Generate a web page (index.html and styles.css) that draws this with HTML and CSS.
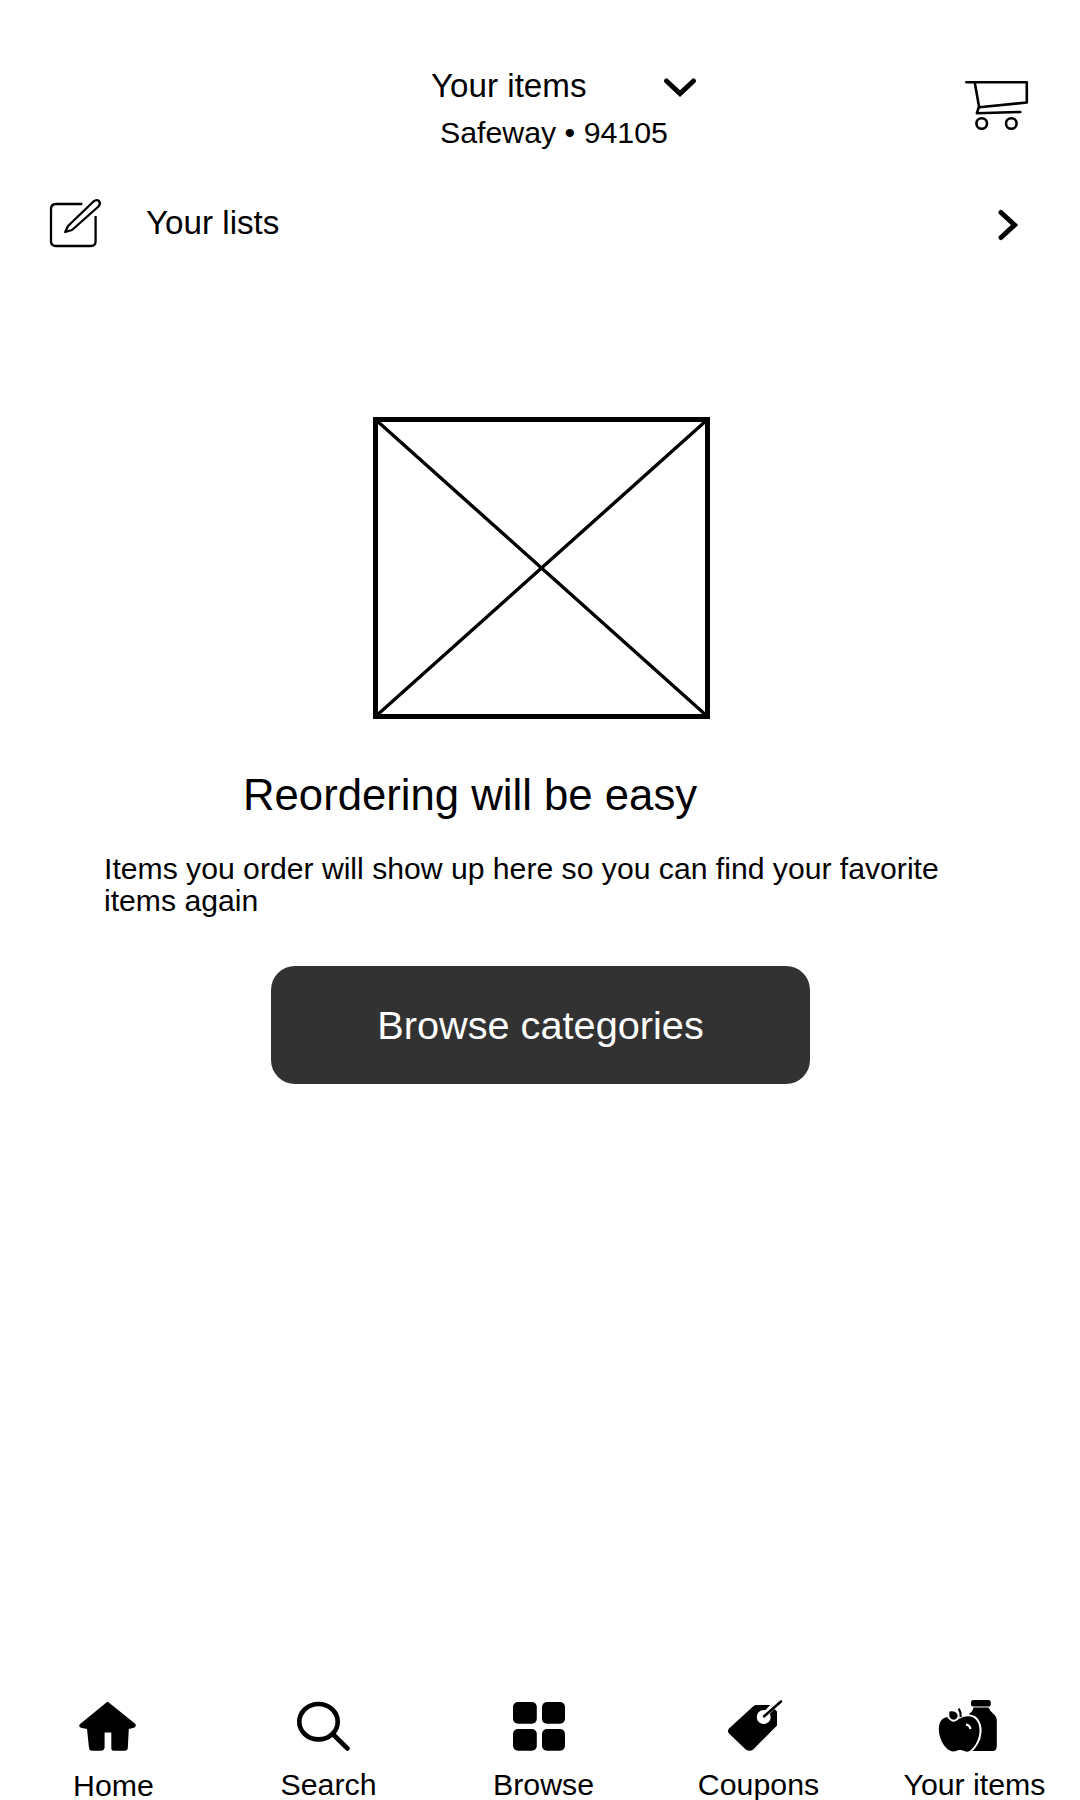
FILE: index.html
```html
<!DOCTYPE html>
<html lang="en">
<head>
<meta charset="utf-8">
<title>Your items</title>
<link rel="stylesheet" href="styles.css">
</head>
<body>
<div class="screen">
  <header class="header">
    <div class="store">
      <div class="store-title">
        <span class="title">Your items</span>
        <svg class="chevron-down" viewBox="0 0 36 24"><path d="M4.5 5 18 17.5 31.5 5"/></svg>
      </div>
      <div class="location">Safeway • 94105</div>
    </div>
    <svg class="cart" viewBox="0 0 72 58">
      <path d="M6.300 7.300H66.800V27.500L19.300 32.300M14.700 7.300 19 31.500 16.900 38.200 60.300 37"/>
      <circle cx="21.700" cy="48.500" r="5.300"/><circle cx="51.300" cy="48.500" r="5.300"/>
    </svg>
  </header>

  <a class="lists">
    <svg class="compose" viewBox="0 0 56 54">
      <path d="M34.300 8H8Q3 8 3 13V45Q3 50 8 50H43Q47.600 50 47.600 45V20"/>
      <path d="M17.200 36 20 30 45.500 5.500Q48.500 3 51 5 53 7.500 50.500 10.500L24 34Z"/>
    </svg>
    <span class="lists-label">Your lists</span>
    <svg class="chevron-right" viewBox="0 0 24 36"><path d="M5 5.500 18.500 18 5 30.500"/></svg>
  </a>

  <main class="empty">
    <div class="placeholder">
      <svg viewBox="0 0 327 292" preserveAspectRatio="none"><path d="M-2-2 329 294M329-2-2 294"/></svg>
    </div>
    <h1 class="heading">Reordering will be easy</h1>
    <p class="message">Items you order will show up here so you can find your favorite items again</p>
    <button class="browse">Browse categories</button>
  </main>

  <nav class="tabs">
    <a class="tab home">
      <svg viewBox="0 0 65 56"><path d="M32.700 6Q34 6 35 7.500L60.500 28Q61.500 31.500 58 32L53.800 33 52.800 52Q52.500 54.700 50 54.700H38.500Q36.300 54.700 36.300 52V36.500H29.600V51.500Q29 54.700 26 54.700H17Q14.300 54.700 14 52L12 33 7 32Q3.500 31.500 4.500 28.500L30.500 7.300Q31.500 6 32.700 6Z"/></svg>
      <span>Home</span>
    </a>
    <a class="tab">
      <svg class="line" viewBox="0 0 65 56"><ellipse cx="28.500" cy="25.700" rx="19.200" ry="17.700"/><path d="M42.700 38 57.500 52.500"/></svg>
      <span>Search</span>
    </a>
    <a class="tab">
      <svg viewBox="0 0 65 56"><rect x="8" y="6" width="23.800" height="21.700" rx="5"/><rect x="37" y="6" width="23" height="21.700" rx="5"/><rect x="8" y="33" width="23.800" height="21.700" rx="5"/><rect x="37" y="33" width="23" height="21.700" rx="5"/></svg>
      <span>Browse</span>
    </a>
    <a class="tab">
      <svg viewBox="0 0 65 56">
        <path d="M36 9H50.500L57 15.500V29.500L33 53.700Q29.500 56 26 53.700L9 37.500Q7 35 9 32.500L33 10.500Q34.500 9 36 9Z"/>
        <circle class="cut" cx="43.700" cy="21" r="7"/>
        <path class="gap" d="M45.500 18 55 8.500"/>
        <path class="string" d="M44.200 20.300 61 5.500"/>
      </svg>
      <span>Coupons</span>
    </a>
    <a class="tab">
      <svg viewBox="0 0 65 56">
        <rect x="36" y="4" width="19.800" height="6.400" rx="2.500"/>
        <path d="M38.500 11.500H53.500Q55 15 58 17.500 61.800 20 61.800 25V50Q61.800 55 57.500 55H34V18Q37.500 16 38.500 11.500Z"/>
        <path class="apple" d="M25 22.500C31 19 39 19.500 42 25 46 31 45 41 41 47.500 38 52.500 35 56.500 30.500 55.500 27 54 24 53.500 21 55 15 57 10 51.500 7 46 3 38 2.500 28 7 23.500 11 20 17 20 21 22.500Z"/>
        <path class="highlight" d="M31 28.700Q34.500 29 35.500 33"/>
        <path class="leaf" d="M14.500 15.500Q18 14.500 21 16.500 24 19.500 21.500 22.500 17.500 25.500 14.500 21Q14 18 14.500 15.500Z"/>
        <path class="stem" d="M23.700 12.700Q26 16 25.700 21"/>
      </svg>
      <span class="current">Your items</span>
    </a>
  </nav>
</div>
</body>
</html>
```
FILE: styles.css
```css
* {
  box-sizing: border-box;
}

body {
  margin: 0;
  background: #fff;
  color: #000;
  font-family: "Liberation Sans", Arial, sans-serif;
}

.screen {
  display: flex;
  flex-direction: column;
  width: 1080px;
  height: 1800px;
  overflow: hidden;
}

svg {
  display: block;
  flex: none;
}

.header {
  display: flex;
  justify-content: space-between;
  height: 190px;
  padding: 66px 48px 0 431px;
}

.store-title {
  display: flex;
  align-items: center;
  justify-content: space-between;
  width: 267px;
}

.title,
.lists-label {
  font-size: 33.2px;
  line-height: 40px;
}

.chevron-down {
  width: 36px;
  height: 24px;
  margin-top: 3px;
}

.chevron-down,
.chevron-right {
  fill: none;
  stroke: #000;
  stroke-width: 5;
  stroke-linecap: round;
}

.location {
  margin: 9px 0 0 9px;
  font-size: 30.3px;
  line-height: 36px;
}

.cart {
  width: 72px;
  height: 58px;
  margin-top: 9px;
  fill: none;
  stroke: #000;
  stroke-width: 2.6;
  stroke-linecap: round;
  stroke-linejoin: round;
}

.lists {
  display: flex;
  align-items: center;
  height: 66px;
  padding: 0 60px 0 48px;
}

.compose {
  width: 56px;
  height: 54px;
  fill: none;
  stroke: #000;
  stroke-width: 2.3;
  stroke-linejoin: round;
}

.lists-label {
  margin: 0 auto 0 42px;
}

.chevron-right {
  width: 24px;
  height: 36px;
  margin-top: 4px;
}

.empty {
  display: flex;
  flex: 1;
  flex-direction: column;
  align-items: center;
  padding-top: 161px;
}

.placeholder {
  width: 337px;
  height: 302px;
  margin-left: 3px;
  border: 5px solid #000;
}

.placeholder svg {
  width: 327px;
  height: 292px;
  stroke: #000;
  stroke-width: 3.4;
}

.heading {
  align-self: flex-start;
  margin: 51px 0 0 243px;
  font-size: 43.7px;
  font-weight: 400;
  line-height: 50px;
}

.message {
  align-self: flex-start;
  width: 870px;
  margin: 33px 0 0 104px;
  font-size: 30.16px;
  line-height: 32px;
}

.browse {
  width: 539px;
  height: 118px;
  margin: 49px 0 0 1px;
  padding: 0;
  border: 0;
  border-radius: 24px;
  background: #323232;
  color: #fff;
  font-family: inherit;
  font-size: 39.7px;
}

.tabs {
  display: grid;
  grid-template-columns: repeat(5, 215px);
  height: 104px;
  padding-left: 6px;
}

.tab {
  display: flex;
  flex-direction: column;
  align-items: center;
  gap: 18px;
  font-size: 30.3px;
  line-height: 30px;
}

.home {
  gap: 19px;
}

.current {
  padding-left: 2px;
}

.tab svg {
  width: 65px;
  height: 56px;
  margin-right: 12px;
}

.line {
  fill: none;
  stroke: #000;
  stroke-width: 4.6;
  stroke-linecap: round;
}

.cut {
  fill: #fff;
}

.gap {
  stroke: #fff;
  stroke-width: 6;
}

.string {
  stroke: #000;
  stroke-width: 2.6;
  stroke-linecap: round;
}

.apple,
.leaf {
  stroke: #fff;
  stroke-width: 4;
  paint-order: stroke;
}

.highlight {
  fill: none;
  stroke: #fff;
  stroke-width: 2.2;
}

.stem {
  fill: none;
  stroke: #000;
  stroke-width: 2.2;
}
```
